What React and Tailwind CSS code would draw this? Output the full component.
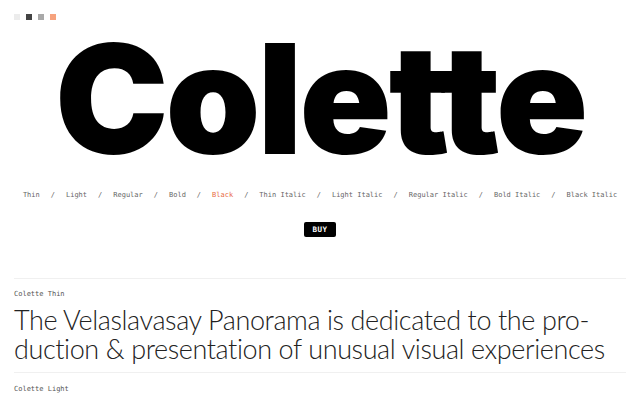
import React from 'react';

const styles = ['Thin', 'Light', 'Regular', 'Bold', 'Black', 'Thin Italic', 'Light Italic', 'Regular Italic', 'Bold Italic', 'Black Italic'];

export default function App() {
  return (
    <div className="w-[640px] h-[400px] overflow-hidden bg-white text-black" style={{ fontFamily: 'Inter, "Noto Sans", sans-serif' }}>
      {/* colour swatches */}
      <div className="flex gap-[6px] pl-[14px] pt-[14px]">
        <span className="w-[6px] h-[6px] bg-[#ececec]" />
        <span className="w-[6px] h-[6px] bg-[#444444]" />
        <span className="w-[6px] h-[6px] bg-[#a9a9a9]" />
        <span className="w-[6px] h-[6px] bg-[#f6a27d]" />
      </div>

      <h1 className="text-center text-[152px] leading-[150px] font-black tracking-[-3px] mt-[4px]">Colette</h1>

      <nav className="flex justify-center items-center gap-[11px] mt-[16px] text-[7px] leading-[10px] text-[#666] whitespace-nowrap" style={{ fontFamily: '"DejaVu Sans Mono", monospace' }}>
        {styles.map((s, i) => (
          <React.Fragment key={s}>
            {i > 0 && <span>/</span>}
            <span className={s === 'Black' ? 'text-[#e8693f]' : ''}>{s}</span>
          </React.Fragment>
        ))}
      </nav>

      <div className="flex justify-center mt-[22px]">
        <span className="bg-black text-white text-[7.5px] leading-[9px] font-bold px-[8px] py-[3px] rounded-[2px] tracking-[0.5px]" style={{ fontFamily: '"DejaVu Sans Mono", monospace' }}>BUY</span>
      </div>

      <section className="mx-[14px] mt-[41px] border-t border-[#f0f0f0]">
        <div className="pt-[10px] text-[7px] leading-[10px] text-[#555]" style={{ fontFamily: '"DejaVu Sans Mono", monospace' }}>Colette Thin</div>
        <p className="mt-[6px] text-[27px] leading-[29px] font-light tracking-[-0.4px] text-[#222] whitespace-nowrap" style={{ fontFamily: 'Lato, sans-serif' }}>
          The Velaslavasay Panorama is dedicated to the pro-<br />duction &amp; presentation of unusual visual experiences
        </p>
      </section>

      <section className="mx-[14px] mt-[9px] border-t border-[#f0f0f0]">
        <div className="pt-[11px] text-[7px] leading-[10px] text-[#555]" style={{ fontFamily: '"DejaVu Sans Mono", monospace' }}>Colette Light</div>
      </section>
    </div>
  );
}
